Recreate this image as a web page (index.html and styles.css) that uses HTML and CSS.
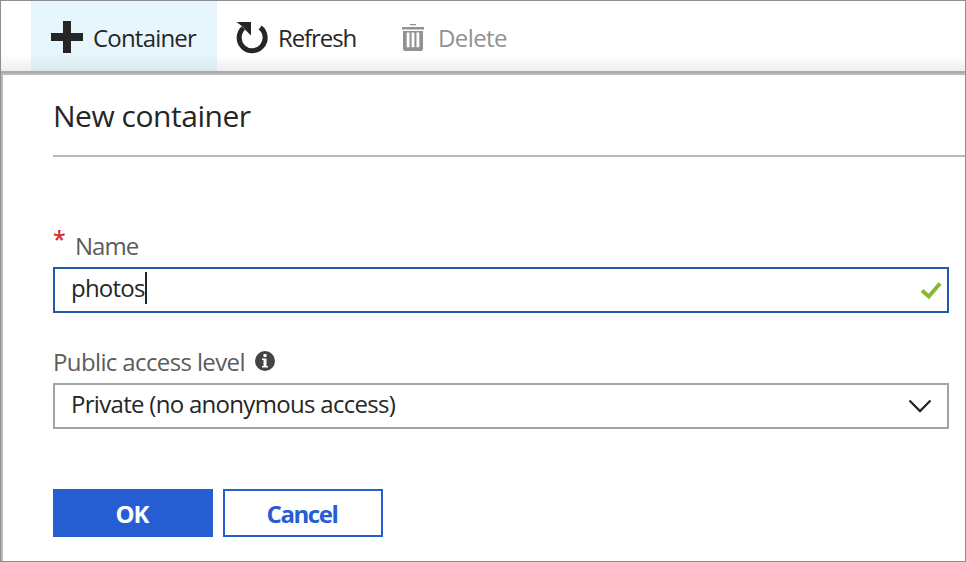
FILE: index.html
```html
<!DOCTYPE html>
<html lang="en">
<head>
<meta charset="utf-8">
<title>New container</title>
<link rel="stylesheet" href="styles.css">
</head>
<body>
<div class="window">
  <nav class="toolbar">
    <div class="command command-active">
      <svg class="icon-plus" width="32" height="32" viewBox="0 0 32 32"><path fill="#262626" d="M12 0h8v12h12v8H20v12h-8V20H0v-8h12z"/></svg>
      <span class="t-container">Container</span>
    </div>
    <div class="command command-refresh">
      <svg class="icon-refresh" width="32" height="33" viewBox="0 0 32 33"><path fill="none" stroke="#262626" stroke-width="5" d="M24.200 6.500A13 13 0 1 1 7.500 7"/><path fill="#262626" d="M.5 1H15v13.500l-5-5-3-3.500z"/></svg>
      <span class="t-refresh">Refresh</span>
    </div>
    <div class="command command-disabled">
      <svg class="icon-trash" width="22" height="28" viewBox="0 0 22 28"><path fill="#929292" d="M8 0h6v1.300H8zM0 3h22v2.500H0zM1 7h20v18q0 2-2 2H3q-2 0-2-2z"/><path stroke="#fff" stroke-width="2.800" d="M6.100 8.500v14.700M11 8.500v14.700M15.900 8.500v14.700"/></svg>
      <span class="t-delete">Delete</span>
    </div>
  </nav>
  <main class="panel">
    <h1 class="title"><span>New container</span></h1>
    <form class="form">
      <div class="label label-name"><span class="required">*</span><span class="t-name">Name</span></div>
      <div class="field field-focus">
        <span class="value t-photos">photos</span><i class="caret"></i>
        <svg class="icon-check" width="22" height="18" viewBox="0 0 22 18"><path fill="none" stroke="#88b832" stroke-width="4" d="M2 8.500l6.800 6L20 1.500"/></svg>
      </div>
      <div class="label label-access"><span class="t-access">Public access level</span>
        <svg class="icon-info" width="20" height="20" viewBox="0 0 20 20"><circle cx="10" cy="10" r="10" fill="#444"/><path fill="#fff" d="M8.500 3h3v3h-3zM7 7.500h4.500V15H13v1.500H7V15h1.500V9H7z"/></svg>
      </div>
      <div class="field field-select">
        <span class="value t-private">Private (no anonymous access)</span>
        <svg class="icon-chevron" width="24" height="14" viewBox="0 0 24 14"><path fill="none" stroke="#262626" stroke-width="2.300" d="M1.500 1.500L12 12 22.500 1.500"/></svg>
      </div>
      <div class="actions">
        <div class="button button-primary"><span class="t-ok">OK</span></div>
        <div class="button"><span class="t-cancel">Cancel</span></div>
      </div>
    </form>
  </main>
</div>
</body>
</html>
```
FILE: styles.css
```css
* { box-sizing: border-box; }
body { margin: 0; font: 24px/34px "Open Sans", "Noto Sans", sans-serif; color: #262626; background: #fff; }
svg { display: block; flex: none; }
span { white-space: nowrap; }
.window { width: 966px; height: 562px; border: 1px solid #8e8e8e; display: flex; flex-direction: column; overflow: hidden; }
.toolbar { display: flex; height: 72px; flex: none; padding-left: 30px; border-bottom: 2px solid #a9abaa; background: linear-gradient(#fff 76%, #eee); }
.command { display: flex; align-items: center; height: 70px; }
.command span { padding-top: 3px; }
.command-active { width: 186px; padding-left: 20px; gap: 10px; background: linear-gradient(#e7f6fc 76%, #d9e8ea); }
.command-refresh { width: 185px; padding-left: 19px; gap: 10px; }
.command-disabled { color: #929292; gap: 14px; }
.icon-plus { margin-top: 2px; }
.icon-refresh { margin-top: 2px; }
.icon-trash { margin-top: 4px; }
.panel { flex: 1; border-top: 2px solid #b9b9b9; border-left: 2px solid #b9b9b9; padding-left: 50px; }
.title { margin: 0; height: 82px; border-bottom: 2px solid #b9b9b9; font-size: 30px; line-height: 81px; font-weight: 400; letter-spacing: -.47px; }
.form { width: 896px; padding-top: 72px; }
.label { display: flex; align-items: center; color: #5c5c5c; }
.label-name { height: 38px; padding-bottom: 4px; }
.required { width: 22px; color: #d92c2c; font-weight: 600; font-size: 23px; padding-bottom: 15px; }
.field { display: flex; align-items: center; height: 46px; border: 2px solid #a3a3a3; padding: 0 16px; }
.field-focus { border-color: #2359a8; padding-right: 5px; }
.field-select { padding-right: 15px; }
.value { padding-bottom: 4px; }
.caret { width: 2px; height: 32px; background: #262626; margin-bottom: 4px; }
.icon-check, .icon-chevron { margin-left: auto; }
.icon-check { margin-top: 2px; }
.label-access { height: 34px; margin: 32px 0 4px; gap: 10px; }
.icon-info { margin-bottom: 3px; }
.actions { display: flex; gap: 10px; margin-top: 60px; }
.button { width: 160px; height: 48px; border: 2px solid #255ed3; color: #255ed3; font-weight: 700; display: flex; justify-content: center; align-items: center; padding: 2px 2px 0 0; }
.button-primary { background: #255ed3; color: #fff; }
.t-container { letter-spacing: -.8px; }
.t-refresh { letter-spacing: -1.100px; }
.t-delete { letter-spacing: -.6px; }
.t-name { letter-spacing: -1px; }
.t-photos { letter-spacing: -.78px; }
.t-access { letter-spacing: -.62px; }
.t-private { letter-spacing: -.7px; }
.t-ok { letter-spacing: -1px; }
.t-cancel { letter-spacing: -1.4px; }
```
